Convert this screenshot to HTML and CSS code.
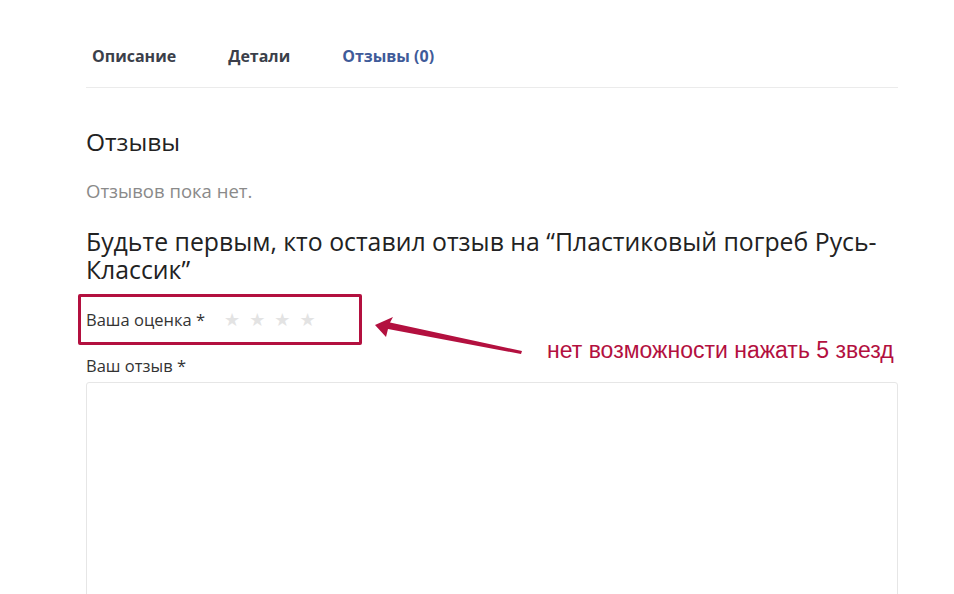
FILE: index.html
```html
<!DOCTYPE html>
<html lang="ru">
<head>
<meta charset="utf-8">
<title>Отзывы</title>
<link rel="stylesheet" href="styles.css">
</head>
<body>
<div class="page">
  <ul class="tabs">
    <li class="tab">Описание</li>
    <li class="tab">Детали</li>
    <li class="tab active">Отзывы (0)</li>
  </ul>
  <h2 class="title">Отзывы</h2>
  <p class="empty">Отзывов пока нет.</p>
  <h3 class="reply-title">Будьте первым, кто оставил отзыв на “Пластиковый погреб Русь-Классик”</h3>
  <div class="rating-row">
    <span class="label">Ваша оценка *</span>
    <span class="stars"><span>★</span><span>★</span><span>★</span><span>★</span></span>
  </div>
  <div class="label review-label">Ваш отзыв *</div>
  <div class="textarea"></div>
</div>

<div class="mark-box"></div>
<svg class="arrow" width="954" height="594" viewBox="0 0 954 594">
  <path d="M375 325 L393 317 L390 322.5 L522 351 L521 354 L388 329 L386 337 Z" fill="#b3103f"/>
</svg>
<div class="note">нет возможности нажать 5 звезд</div>
</body>
</html>
```
FILE: styles.css
```css
html, body {
  margin: 0;
  padding: 0;
  background: #fff;
}
body {
  font-family: "Open Sans", "Noto Sans", sans-serif;
  color: #333;
  width: 954px;
  height: 594px;
  overflow: hidden;
  position: relative;
}
.page {
  margin-left: 86px;
  width: 812px;
}
.tabs {
  list-style: none;
  margin: 0;
  padding: 44px 0 19px 6px;
  display: flex;
  gap: 52px;
  border-bottom: 1px solid #ebebeb;
}
.tab {
  font-size: 16px;
  line-height: 24px;
  font-weight: 700;
  color: #3b3f4a;
}
.tab.active {
  color: #3f5b99;
}
.title {
  margin: 39px 0 0;
  font-size: 24.5px;
  line-height: 30px;
  font-weight: 400;
  color: #222;
}
.empty {
  margin: 22px 0 0;
  font-size: 18.5px;
  line-height: 24px;
  color: #8a8a8a;
}
.reply-title {
  margin: 24px 0 0;
  font-size: 24.8px;
  line-height: 28px;
  font-weight: 400;
  color: #222;
}
.rating-row {
  margin-top: 25px;
  display: flex;
  align-items: center;
  gap: 19px;
}
.label {
  font-size: 16.5px;
  line-height: 24px;
  color: #333;
}
.stars {
  display: flex;
  gap: 9px;
  color: #e3e3e3;
  font-size: 18px;
  line-height: 24px;
  font-family: "DejaVu Sans", sans-serif;
}
.review-label {
  margin-top: 22px;
}
.textarea {
  margin-top: 4px;
  height: 300px;
  border: 1px solid #e6e6e6;
  border-radius: 3px;
}
.mark-box {
  position: absolute;
  left: 78px;
  top: 294px;
  width: 278px;
  height: 45px;
  border: 3.5px solid #b3103f;
  border-radius: 2px;
}
.arrow {
  position: absolute;
  left: 0;
  top: 0;
  pointer-events: none;
}
.note {
  position: absolute;
  left: 547px;
  top: 337px;
  font-family: "Liberation Sans", Arial, sans-serif;
  font-size: 23px;
  line-height: 26px;
  color: #b3103f;
  white-space: nowrap;
}
```
